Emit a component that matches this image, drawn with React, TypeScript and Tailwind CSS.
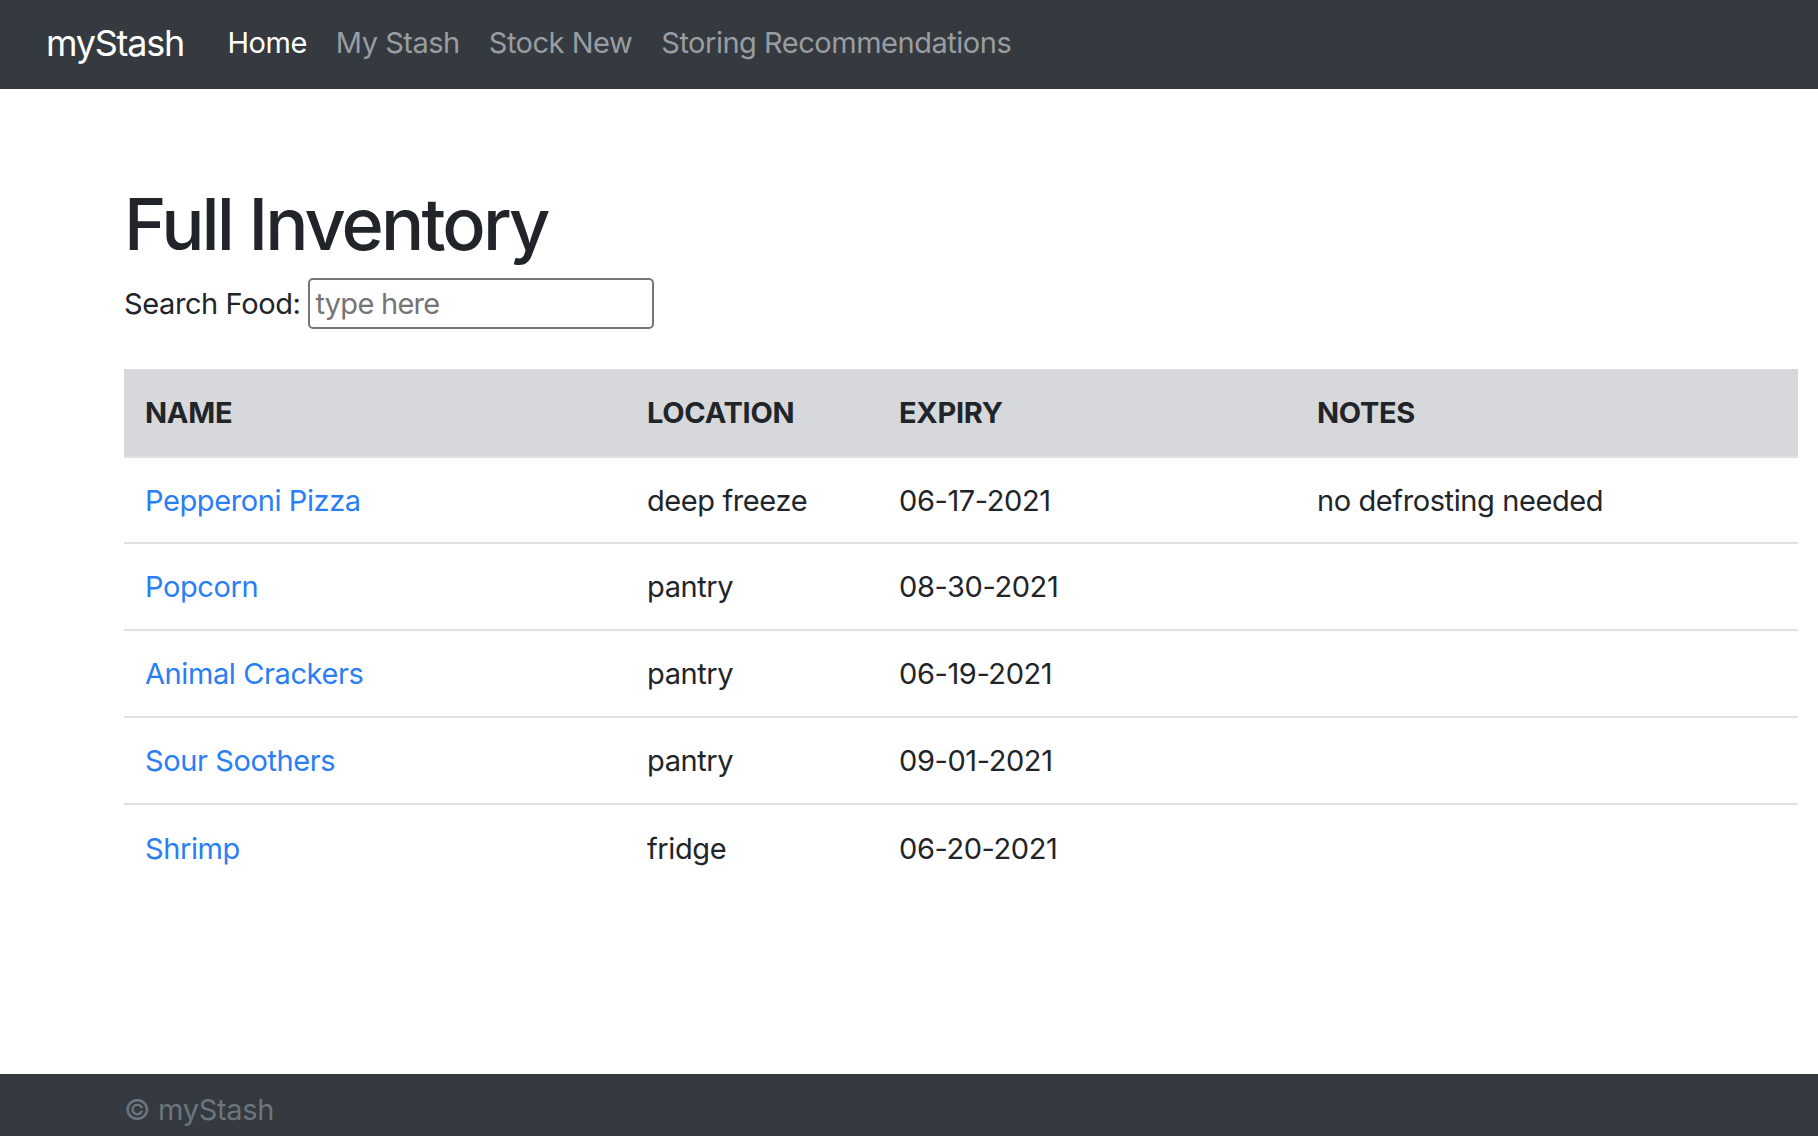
const items = [
  { name: "Pepperoni Pizza", location: "deep freeze", expiry: "06-17-2021", notes: "no defrosting needed" },
  { name: "Popcorn", location: "pantry", expiry: "08-30-2021", notes: "" },
  { name: "Animal Crackers", location: "pantry", expiry: "06-19-2021", notes: "" },
  { name: "Sour Soothers", location: "pantry", expiry: "09-01-2021", notes: "" },
  { name: "Shrimp", location: "fridge", expiry: "06-20-2021", notes: "" },
];

function Navbar() {
  return (
    <nav className="h-[89px] bg-[#343a40] flex items-center pl-[46px] pb-[4px] tracking-[-0.03em]">
      <a href="#" className="text-[36px] text-white mr-[29px] leading-none tracking-[-0.035em]">
        myStash
      </a>
      <a href="#" className="px-[14.5px] text-[29px] text-white">
        Home
      </a>
      <a href="#" className="px-[14.5px] text-[29px] text-[#9a9da0]">
        My Stash
      </a>
      <a href="#" className="px-[14.5px] text-[29px] text-[#9a9da0]">
        Stock New
      </a>
      <a href="#" className="px-[14.5px] text-[29px] text-[#9a9da0]">
        Storing Recommendations
      </a>
    </nav>
  );
}

export default function App() {
  return (
    <div className="font-['Inter',sans-serif] text-[#212529] bg-white">
      <Navbar />
      <main className="h-[985px] pl-[124px] pr-[20px] pt-[92px] tracking-[-0.025em]">
        <h1 className="text-[72px] font-medium leading-[1.2] tracking-[-0.04em]">Full Inventory</h1>
        <div className="mt-[11px] flex items-center gap-[8px] text-[29px]">
          <label>Search Food:</label>
          <input
            placeholder="type here"
            className="w-[346px] h-[51px] border-2 border-[#767676] rounded-[5px] px-[5px] text-[29px] tracking-[-0.025em] placeholder:text-[#757575] outline-none"
          />
        </div>
        <table className="mt-[40px] w-full table-fixed text-[29px] text-left">
          <colgroup>
            <col className="w-[502px]" />
            <col className="w-[252px]" />
            <col className="w-[418px]" />
            <col />
          </colgroup>
          <thead>
            <tr className="bg-[#d6d8db] h-[88px] border-b-2 border-[#dee2e6] tracking-[-0.01em]">
              <th className="px-[21px] font-bold">NAME</th>
              <th className="px-[21px] font-bold">LOCATION</th>
              <th className="px-[21px] font-bold">EXPIRY</th>
              <th className="px-[21px] font-bold">NOTES</th>
            </tr>
          </thead>
          <tbody>
            {items.map((it, i) => (
              <tr key={it.name} className={i > 0 ? "h-[87px] border-t-2 border-[#dee2e6]" : "h-[86px]"}>
                <td className="px-[21px]">
                  <a href="#" className="text-[#2a7ef5]">
                    {it.name}
                  </a>
                </td>
                <td className="px-[21px]">{it.location}</td>
                <td className="px-[21px]">{it.expiry}</td>
                <td className="px-[21px]">{it.notes}</td>
              </tr>
            ))}
          </tbody>
        </table>
      </main>
      <footer className="h-[80px] bg-[#343a40] pl-[124px] pt-[14px] tracking-[-0.02em]">
        <span className="text-[29px] text-[#6c757d]">© myStash</span>
      </footer>
    </div>
  );
}
